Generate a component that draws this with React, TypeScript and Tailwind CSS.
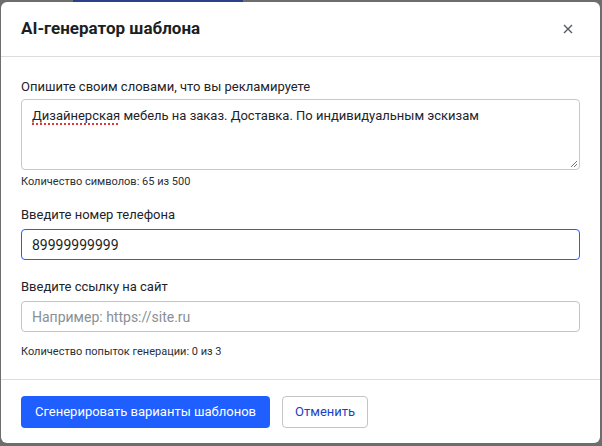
import React from 'react';

const font = { fontFamily: 'Roboto, "Noto Sans", sans-serif' };

const Field: React.FC<{ label: string; children: React.ReactNode }> = ({ label, children }) => (
  <div className="flex flex-col">
    <label className="text-[13px] leading-5 text-[#1f2328]">{label}</label>
    <div className="mt-1">{children}</div>
  </div>
);

export default function App() {
  return (
    <div className="relative h-[446px] w-[602px] overflow-hidden bg-[#6d6d6d]" style={font}>
      <div className="absolute left-[73px] top-0 h-[2px] w-[170px] bg-[#2b3f8f]" />
      <div className="absolute left-[1px] top-[2px] flex h-[441px] w-[599px] flex-col rounded-md bg-white">
        <div className="flex h-[55px] items-center justify-between border-b border-[#dcdcdc] pl-5 pr-5">
          <h1 className="text-[17px] font-bold text-[#1b1f24]">AI-генератор шаблона</h1>
          <button className="flex h-6 w-6 items-center justify-center text-[#555b63]">
            <svg width="10" height="10" viewBox="0 0 10 10" fill="none" stroke="currentColor" strokeWidth="1.4">
              <path d="M1 1l8 8M9 1L1 9" />
            </svg>
          </button>
        </div>

        <div className="flex flex-1 flex-col px-5 pt-5">
          <label className="text-[13px] leading-5 text-[#1f2328]">Опишите своим словами, что вы рекламируете</label>
          <div className="relative mt-[2px] h-[71px] rounded border border-[#c8c8c8] px-[10px] py-[6px] text-[13px] leading-5 text-[#1f2328]">
            <span className="underline decoration-[#e0333d] decoration-dotted decoration-[1.5px] underline-offset-[3px]">Дизайнерская</span>{' '}
            мебель на заказ. Доставка. По индивидуальным эскизам
            <svg className="absolute bottom-[2px] right-[2px]" width="7" height="7" viewBox="0 0 7 7" stroke="#777" strokeWidth="1">
              <path d="M1 7L7 1M4 7L7 4" />
            </svg>
          </div>
          <p className="mt-1 text-[11px] leading-4 text-[#2b2f35]">Количество символов: 65 из 500</p>

          <div className="mt-[15px]">
            <Field label="Введите номер телефона">
              <input
                readOnly
                value="89999999999"
                className="h-[31px] w-full rounded border-[1.5px] border-[#1f5eff] px-[10px] text-[14px] text-[#1b1f24] outline-none"
              />
            </Field>
          </div>

          <div className="mt-[17px]">
            <Field label="Введите ссылку на сайт">
              <input
                readOnly
                placeholder="Например: https://site.ru"
                className="h-[31px] w-full rounded border border-[#c4c4c4] px-[10px] text-[14px] text-[#1b1f24] outline-none placeholder:text-[#8a8f96]"
              />
            </Field>
          </div>

          <p className="mt-3 text-[11px] leading-4 text-[#2b2f35]">Количество попыток генерации: 0 из 3</p>
        </div>

        <div className="flex h-[64px] items-center gap-3 border-t border-[#dcdcdc] px-5">
          <button className="h-8 rounded bg-[#1f5eff] px-[14px] text-[13px] text-white">
            Сгенерировать варианты шаблонов
          </button>
          <button className="h-8 rounded border border-[#c4c4c4] px-[12px] text-[13px] text-[#1d3fc4]">
            Отменить
          </button>
        </div>
      </div>
    </div>
  );
}
